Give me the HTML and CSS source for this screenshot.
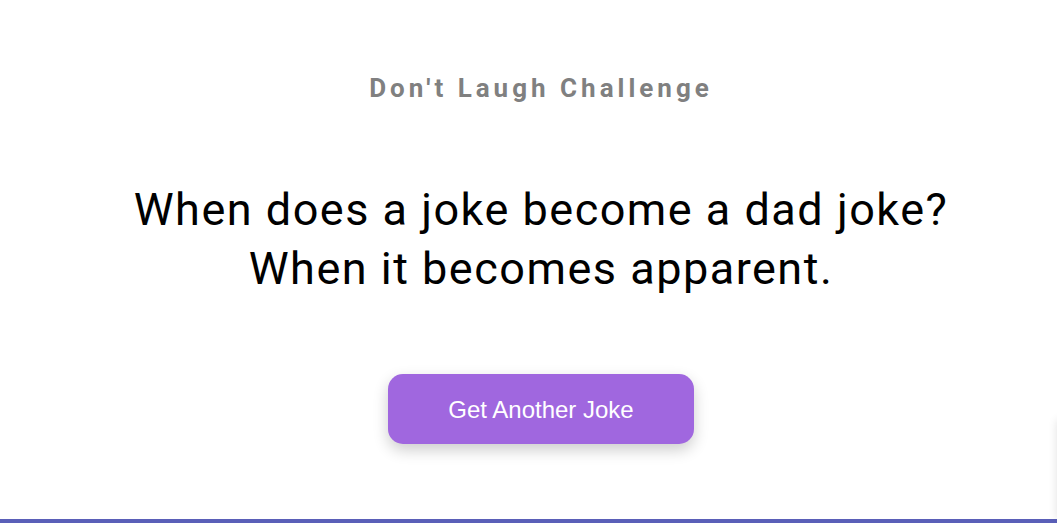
FILE: index.html
```html
<!DOCTYPE html>
<html lang="en">
<head>
<meta charset="utf-8">
<title>Don't Laugh Challenge</title>
<link rel="stylesheet" href="styles.css">
</head>
<body>
<main class="card">
  <h3 class="title">Don't Laugh Challenge</h3>
  <p class="joke">When does a joke become a dad joke?<br>When it becomes apparent.</p>
  <button class="btn" type="button">Get Another Joke</button>
</main>
<div class="edge-shadow"></div>
</body>
</html>
```

FILE: styles.css
```css
html, body {
  margin: 0;
  padding: 0;
  height: 100%;
  overflow: hidden;
}
body {
  background: #5a5fb8;
  font-family: Roboto, "Liberation Sans", sans-serif;
  position: relative;
}
.card {
  background: #fff;
  height: 519px;
  box-sizing: border-box;
  display: flex;
  flex-direction: column;
  align-items: center;
  padding-top: 70px;
  padding-left: 25px;
  text-align: center;
}
.title {
  margin: 0;
  font-size: 26px;
  font-weight: 700;
  letter-spacing: 4px;
  color: #808080;
  line-height: 36px;
}
.joke {
  margin: 74px 0 0;
  font-size: 45px;
  font-weight: 400;
  letter-spacing: 1.5px;
  line-height: 59px;
  color: #000;
}
.btn {
  margin-top: 76px;
  width: 306px;
  height: 70px;
  padding-top: 2px;
  border: none;
  border-radius: 15px;
  background: #a067df;
  color: #fff;
  font-family: "Liberation Sans", Arial, sans-serif;
  font-size: 24px;
  box-shadow: 0 6px 15px rgba(0, 0, 0, 0.2);
  cursor: pointer;
}
.edge-shadow {
  position: absolute;
  left: 1057px;
  top: 420px;
  width: 20px;
  height: 99px;
  background: #fff;
  box-shadow: 0 0 10px rgba(0, 0, 0, 0.12);
}
```
